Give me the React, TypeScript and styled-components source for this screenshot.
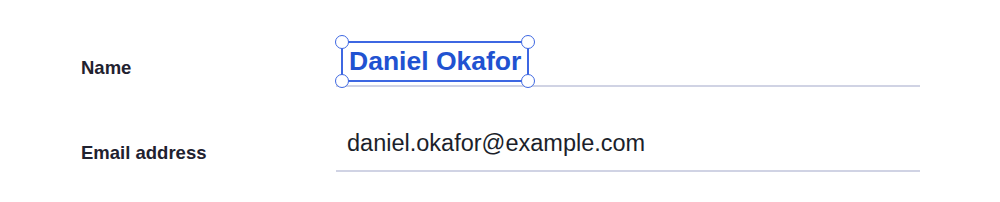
import React from 'react';
import styled, { createGlobalStyle } from 'styled-components';

const GlobalStyle = createGlobalStyle`
  body {
    margin: 0;
    background: #ffffff;
    font-family: "Liberation Sans", Arial, sans-serif;
  }
`;

const Form = styled.main`
  display: grid;
  grid-template-columns: 255px 584px;
  row-gap: 39px;
  padding: 41px 0 0 81px;
`;

const Label = styled.div`
  display: flex;
  align-items: center;
  padding-top: 7px;
  font-size: 18.5px;
  font-weight: 700;
  color: #1f2230;
`;

const Field = styled.div`
  box-sizing: border-box;
  height: 46px;
  display: flex;
  align-items: flex-start;
  padding-left: 5px;
  border-bottom: 2px solid #d0d3e4;
`;

const Selected = styled.div`
  position: relative;
  box-sizing: border-box;
  height: 41px;
  padding: 0 6px;
  border: 2px solid #3d67e2;
  font-size: 26.5px;
  line-height: 37px;
  font-weight: 700;
  color: #2152d1;
`;

const Handle = styled.span<{ $top?: boolean; $left?: boolean }>`
  position: absolute;
  width: 14px;
  height: 14px;
  box-sizing: border-box;
  border-radius: 50%;
  background: #ffffff;
  border: 1.5px solid #3d67e2;
  ${(p) => (p.$top ? 'top: -8px;' : 'bottom: -8px;')}
  ${(p) => (p.$left ? 'left: -8px;' : 'right: -8px;')}
`;

const Value = styled.div`
  padding-left: 6px;
  font-size: 23.5px;
  line-height: 34px;
  color: #1c1f2b;
`;

export default function App() {
  return (
    <>
      <GlobalStyle />
      <Form>
        <Label>Name</Label>
        <Field>
          <Selected>
            Daniel Okafor
            <Handle $top $left />
            <Handle $top />
            <Handle $left />
            <Handle />
          </Selected>
        </Field>
        <Label>Email address</Label>
        <Field>
          <Value>daniel.okafor@example.com</Value>
        </Field>
      </Form>
    </>
  );
}
